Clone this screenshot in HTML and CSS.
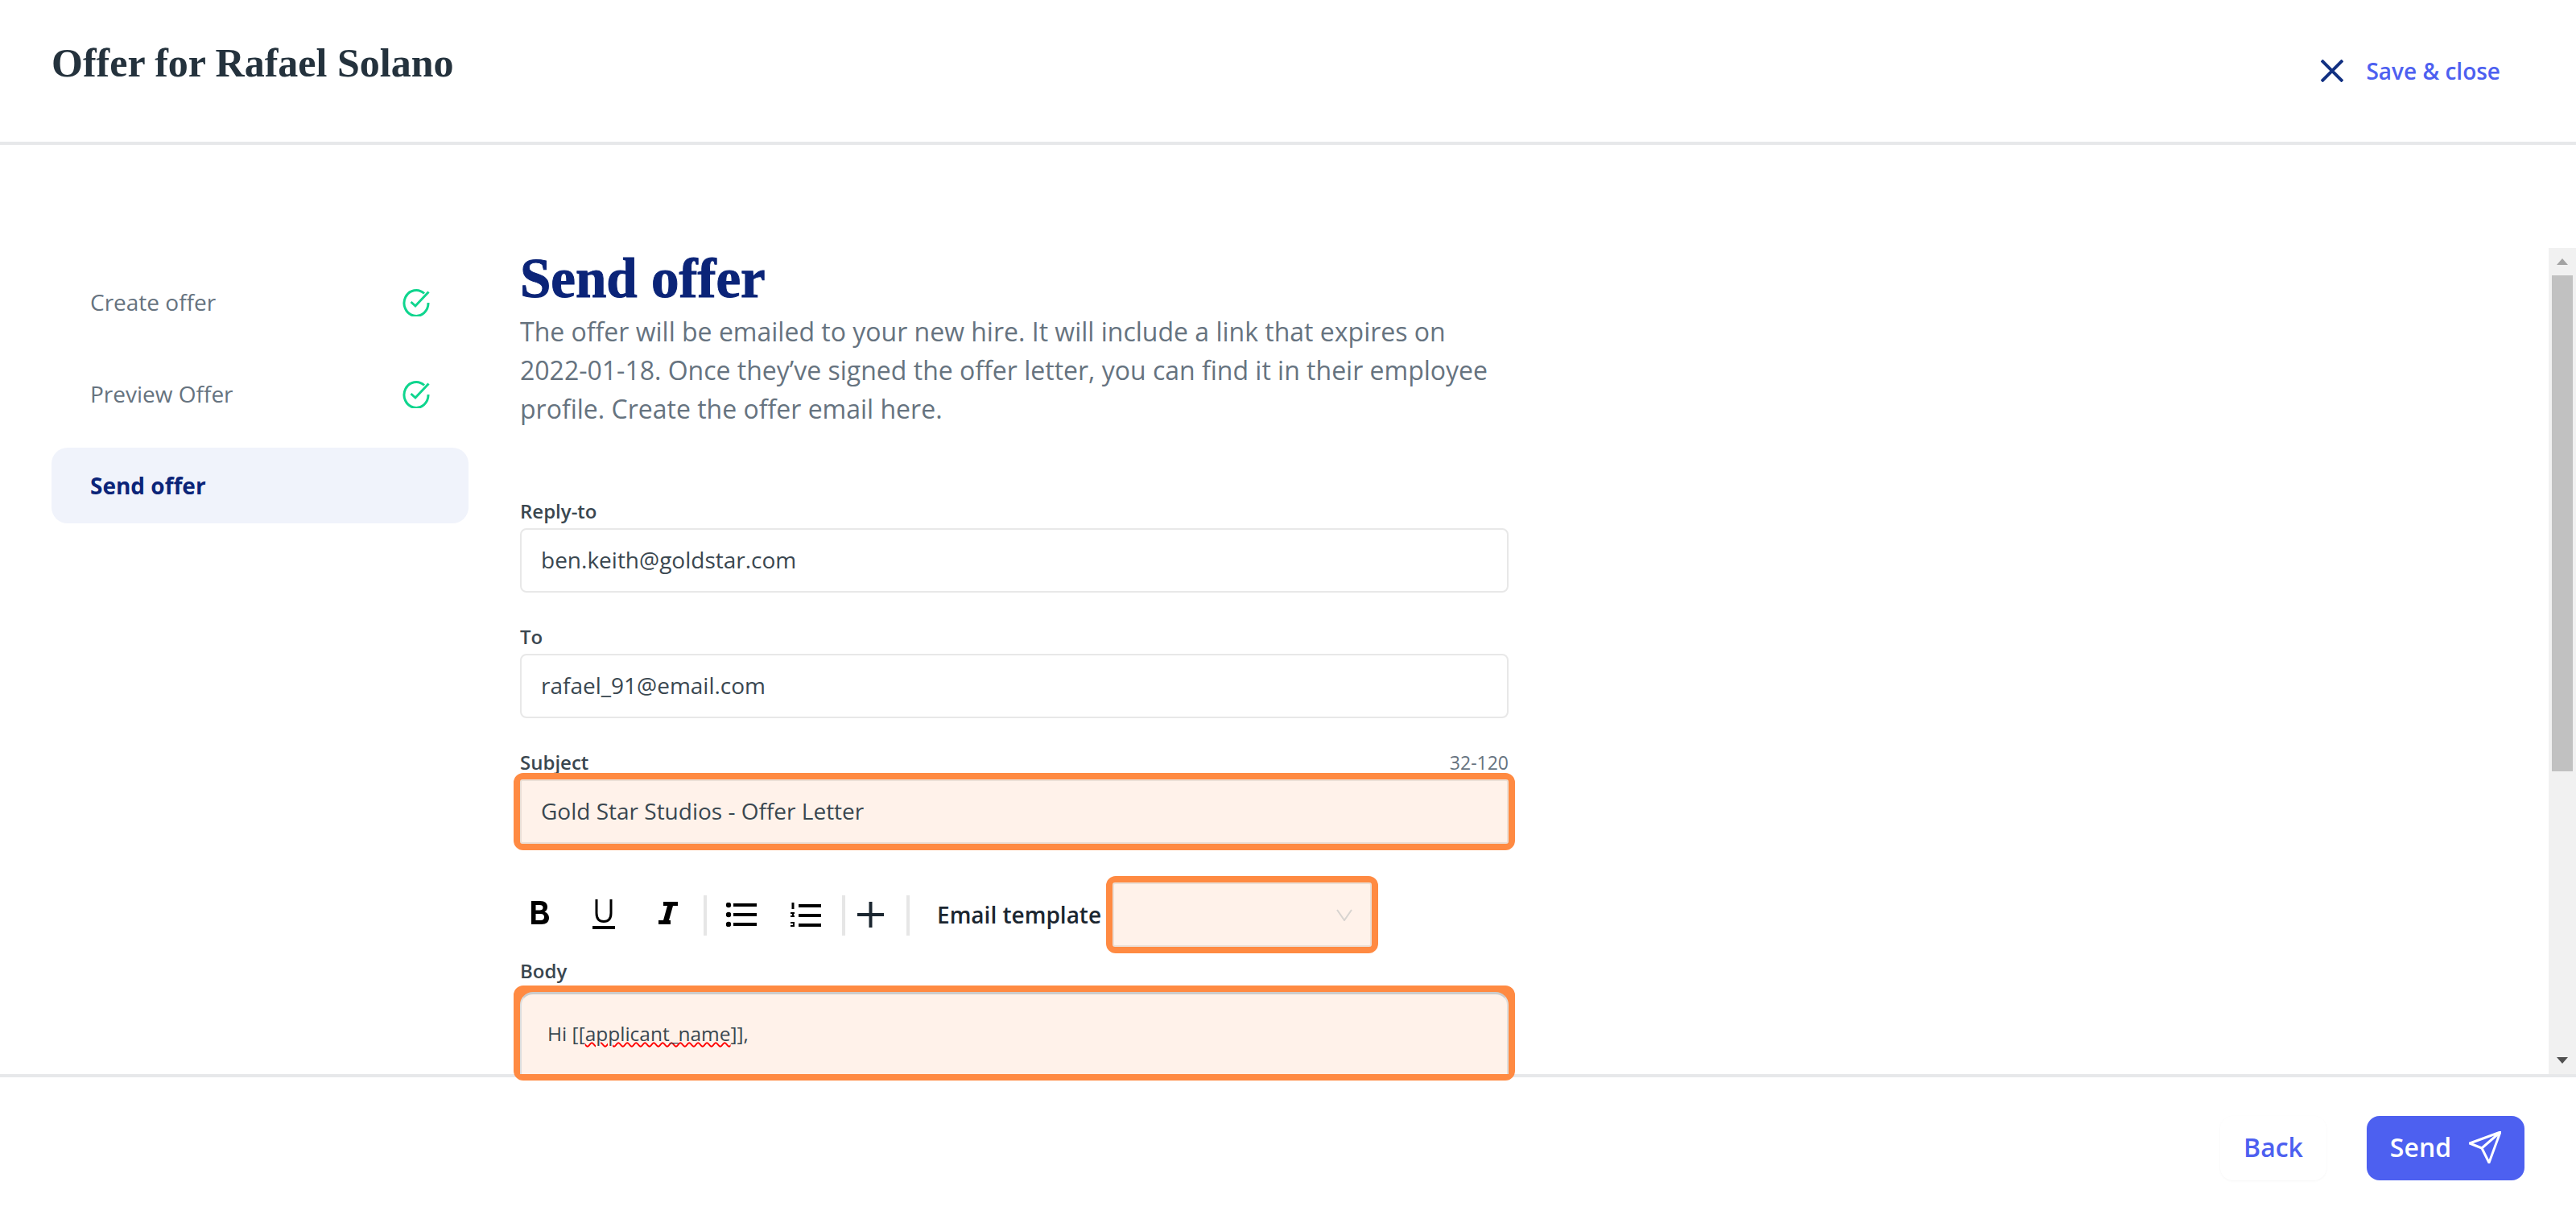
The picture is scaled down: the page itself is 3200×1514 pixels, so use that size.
FILE: index.html
```html
<!DOCTYPE html>
<html lang="en">
<head>
    <meta charset="UTF-8">
    <title>Offer for Rafael Solano</title>
    <link rel="stylesheet" href="styles.css">
</head>
<body>
    <header class="top-bar">
        <div class="page-title">Offer for Rafael Solano</div>
        <a class="close-link">
            <svg class="close-icon" viewBox="0 0 28 28"><path d="M1 1 27 27M27 1 1 27"/></svg>
            <span>Save &amp; close</span>
        </a>
    </header>

    <div class="middle">
        <nav class="steps">
            <div class="step">
                <span>Create offer</span>
                <svg class="check" viewBox="0 0 34 35"><path d="M27 6.500A15 16 0 1 0 32 18M10.500 17 16 22 32.500 4.500"/></svg>
            </div>
            <div class="step">
                <span>Preview Offer</span>
                <svg class="check" viewBox="0 0 34 35"><path d="M27 6.500A15 16 0 1 0 32 18M10.500 17 16 22 32.500 4.500"/></svg>
            </div>
            <div class="step active">
                <span>Send offer</span>
            </div>
        </nav>

        <main class="content">
            <h1>Send offer</h1>
            <p class="intro">The offer will be emailed to your new hire. It will include a link that expires on 2022-01-18. Once they’ve signed the offer letter, you can find it in their employee profile. Create the offer email here.</p>

            <div class="field">
                <label>Reply-to</label>
                <div class="input">ben.keith@goldstar.com</div>
            </div>
            <div class="field">
                <label>To</label>
                <div class="input">rafael_91@email.com</div>
            </div>
            <div class="field subject">
                <div class="label-row">
                    <label>Subject</label>
                    <span class="counter">32-120</span>
                </div>
                <div class="flagged">
                    <div class="input tinted">Gold Star Studios - Offer Letter</div>
                </div>
            </div>

            <div class="toolbar">
                <svg class="tool tool-bold" viewBox="0 0 23 29"><path class="solid" fill-rule="evenodd" d="M1 0H12C18 0 21 3 21 7.500 21 10.500 19.500 12.500 17.500 13.500 20.500 14.500 23 17 23 21 23 26 19.500 29 13.500 29H1ZM6.500 5V11.500H11.500C14 11.500 15.500 10.500 15.500 8.200 15.500 6 14 5 11.500 5ZM6.500 16V24H12.500C15.500 24 17 22.800 17 20 17 17.200 15.500 16 12.500 16Z"/></svg>
                <svg class="tool tool-under" viewBox="0 0 28 37"><path class="line" d="M5 0V17C5 24 8.500 27.500 14 27.500S23 24 23 17V0"/><rect class="solid" y="33" width="28" height="4"/></svg>
                <svg class="tool tool-italic" viewBox="0 0 24 28"><path class="solid" d="M6 0H24V5H18L13 23H15V28H0V23H6L11 5H6Z"/></svg>
                <span class="divider div-one"></span>
                <svg class="tool tool-bullets" viewBox="0 0 38 30"><g class="solid"><circle cx="3" cy="3" r="3.200"/><circle cx="3" cy="15" r="3.200"/><circle cx="3" cy="27" r="3.200"/><rect x="9" y="1" width="29" height="4"/><rect x="9" y="13" width="29" height="4"/><rect x="9" y="25" width="29" height="4"/></g></svg>
                <svg class="tool tool-numbers" viewBox="0 0 38 31"><g class="solid"><rect x="1.500" y="0" width="3" height="8"/><rect x="0" y="12" width="5" height="2"/><rect x="2" y="14" width="2" height="2"/><rect x="0" y="16" width="5" height="2"/><rect x="0" y="24" width="5" height="2"/><rect x="3" y="26" width="2" height="2"/><rect x="0" y="28" width="5" height="2"/><rect x="10" y="2" width="28" height="4"/><rect x="10" y="14" width="28" height="4"/><rect x="10" y="26" width="28" height="4"/></g></svg>
                <span class="divider div-two"></span>
                <svg class="tool tool-plus" viewBox="0 0 33 32"><path class="line thin" d="M16.500 0V32M0 16H33"/></svg>
                <span class="divider div-three"></span>
                <span class="template-label">Email template</span>
                <div class="flagged select-wrap">
                    <div class="select tinted">
                        <svg class="chevron" viewBox="0 0 20 15"><path d="M1 1 10 14 19 1"/></svg>
                    </div>
                </div>
            </div>

            <div class="field body-field">
                <label>Body</label>
                <div class="flagged">
                    <div class="editor tinted">Hi [[<span class="misspelt">applicant_name</span>]],</div>
                </div>
            </div>
        </main>

        <div class="scrollbar">
            <span class="arrow up"></span>
            <div class="track"><div class="thumb"></div></div>
            <span class="arrow down"></span>
        </div>
    </div>

    <footer class="bottom-bar">
        <button class="back-btn">Back</button>
        <button class="send-btn">
            <span>Send</span>
            <svg viewBox="0 0 40 40"><path d="M39 1 1 15 16 21 25 39ZM39 1 16 21"/></svg>
        </button>
    </footer>
</body>
</html>
```

FILE: styles.css
```css
* {
    box-sizing: border-box;
}

body {
    margin: 0;
    display: flex;
    flex-direction: column;
    height: 1514px;
    overflow: hidden;
    background-color: #fff;
    color: #3a4750;
    font-family: "Open Sans", sans-serif;
}

.top-bar {
    flex: none;
    height: 180px;
    display: flex;
    justify-content: space-between;
    align-items: flex-start;
    padding: 48px 94px 0 64px;
    border-bottom: 4px solid #e7e8ea;
}

.page-title {
    font-family: "Liberation Serif", serif;
    font-weight: 700;
    font-size: 50px;
    line-height: 60px;
    color: #24323d;
}

.close-link {
    display: flex;
    align-items: center;
    gap: 28px;
    margin-top: 20px;
    font-size: 28px;
    line-height: 40px;
    font-weight: 600;
    color: #4d60f0;
}

.close-icon {
    width: 28px;
    height: 28px;
    fill: none;
    stroke: #123182;
    stroke-width: 4;
}

.middle {
    flex: 1;
    min-height: 0;
    display: flex;
    position: relative;
}

.steps {
    flex: none;
    width: 646px;
    padding: 148px 64px 0;
}

.step {
    height: 94px;
    margin-bottom: 20px;
    padding: 0 48px;
    display: flex;
    justify-content: space-between;
    align-items: center;
    border-radius: 20px;
    font-size: 28px;
    color: #66737f;
}

.step.active {
    background-color: #f0f3fb;
    color: #0b2478;
    font-weight: 700;
}

.check {
    width: 34px;
    height: 35px;
    fill: none;
    stroke: #0fd58e;
    stroke-width: 3;
}

.content {
    flex: none;
    width: 1228px;
    padding-top: 124px;
}

h1 {
    margin: 0;
    font-family: "Liberation Serif", serif;
    font-weight: 700;
    font-size: 69px;
    line-height: 84px;
    color: #0b2478;
    -webkit-text-stroke: 1px #0b2478;
}

.intro {
    margin: 0 0 84px;
    font-size: 32px;
    line-height: 48px;
    color: #66737f;
}

.field {
    margin-bottom: 36px;
}

.field label, .label-row {
    display: block;
    margin-bottom: 4px;
    padding-top: 2px;
    font-size: 24px;
    line-height: 34px;
    font-weight: 600;
    color: #3a4750;
}

.label-row {
    display: flex;
    justify-content: space-between;
}

.label-row label {
    margin-bottom: 0;
    padding-top: 0;
}

.counter {
    font-size: 23px;
    font-weight: 400;
    color: #66737f;
}

.input {
    height: 80px;
    padding: 0 24px 3px;
    display: flex;
    align-items: center;
    border: 2px solid #e8e8e8;
    border-radius: 8px;
    font-size: 28px;
    color: #3a4750;
}

.tinted {
    background-color: #fff2ea;
}

/* orange review boxes sit on top of the footer line too */
.flagged {
    position: relative;
    z-index: 2;
    margin: -8px;
    border: 8px solid #ff8a42;
    border-radius: 12px;
    background-color: #ff8a42;
}

.flagged .input {
    border-color: #ebdfd6;
    border-radius: 3px;
}

.subject {
    margin-bottom: 40px;
}

.toolbar {
    display: flex;
    align-items: center;
    height: 96px;
    margin-bottom: 3px;
}

.tool {
    flex: none;
}

.tool-bold {
    width: 23px;
    height: 29px;
    margin: 0 0 5px 13px;
}

.tool-under {
    width: 28px;
    height: 37px;
    margin: 0 0 1px 54px;
}

.tool-italic {
    width: 24px;
    height: 28px;
    margin: 0 0 4px 54px;
}

.tool-bullets {
    width: 38px;
    height: 30px;
    margin-left: 24px;
}

.tool-numbers {
    width: 38px;
    height: 31px;
    margin-left: 42px;
}

.tool-plus {
    width: 33px;
    height: 32px;
    margin-left: 15px;
}

.solid {
    fill: #000;
}

.line {
    fill: none;
    stroke: #000;
    stroke-width: 3;
}

.line.thin {
    stroke: #1b2630;
    stroke-width: 4;
}

.divider {
    flex: none;
    width: 4px;
    height: 50px;
    margin-top: 2px;
    background-color: #e6e6e6;
}

.div-one {
    margin-left: 32px;
}

.div-two {
    margin-left: 26px;
}

.div-three {
    margin-left: 28px;
}

.template-label {
    flex: none;
    width: 210px;
    margin-left: 34px;
    font-size: 28px;
    font-weight: 600;
    color: #1b2630;
}

.select-wrap {
    flex: none;
    margin: 0;
    width: 338px;
    height: 96px;
}

.select {
    height: 100%;
    display: flex;
    align-items: center;
    justify-content: flex-end;
    padding-right: 22px;
    border: 2px solid #ebdfd6;
    border-radius: 3px;
}

.chevron {
    width: 20px;
    height: 15px;
    fill: none;
    stroke: #d8d4d0;
    stroke-width: 2;
}

.body-field {
    margin-bottom: 0;
}

.body-field label {
    margin: 3px 0 9px;
}

.editor {
    height: 102px;
    padding: 31px 32px 0;
    border-top: 3px solid #ccc;
    border-left: 2px solid #ddd;
    border-right: 2px solid #ddd;
    border-radius: 16px 16px 0 0;
    font-size: 24.500px;
    line-height: 36px;
    color: #3a4750;
}

.misspelt {
    text-decoration: underline wavy #f00 2px;
}

.scrollbar {
    position: absolute;
    top: 128px;
    right: 0;
    bottom: 0;
    width: 34px;
    display: flex;
    flex-direction: column;
    background-color: #f1f1f1;
}

.track {
    flex: 1;
    padding: 0 4px;
}

.thumb {
    height: 616px;
    background-color: #c1c1c1;
}

.arrow {
    flex: none;
    height: 34px;
    display: flex;
    align-items: center;
    justify-content: center;
}

.arrow::before {
    content: "";
    border-left: 7px solid transparent;
    border-right: 7px solid transparent;
}

.arrow.up::before {
    border-bottom: 8px solid #a3a3a3;
}

.arrow.down::before {
    border-top: 8px solid #505050;
}

.bottom-bar {
    flex: none;
    height: 180px;
    display: flex;
    justify-content: flex-end;
    align-items: flex-start;
    gap: 50px;
    padding: 48px 64px 0 0;
    background-color: #fff;
    border-top: 4px solid #e7e8ea;
}

.back-btn, .send-btn {
    height: 80px;
    padding: 0 0 3px;
    border: 0;
    border-radius: 16px;
    font-family: "Open Sans", sans-serif;
    font-size: 32px;
    font-weight: 600;
}

.back-btn {
    width: 132px;
    background-color: #fff;
    color: #4d60f0;
    box-shadow: 0 1px 3px rgba(0, 0, 0, 0.04);
}

.send-btn {
    width: 196px;
    display: flex;
    align-items: center;
    justify-content: center;
    gap: 22px;
    background-color: #4d60f0;
    color: #fff;
}

.send-btn svg {
    width: 40px;
    height: 40px;
    fill: none;
    stroke: #fff;
    stroke-width: 3;
    stroke-linejoin: round;
}
```
